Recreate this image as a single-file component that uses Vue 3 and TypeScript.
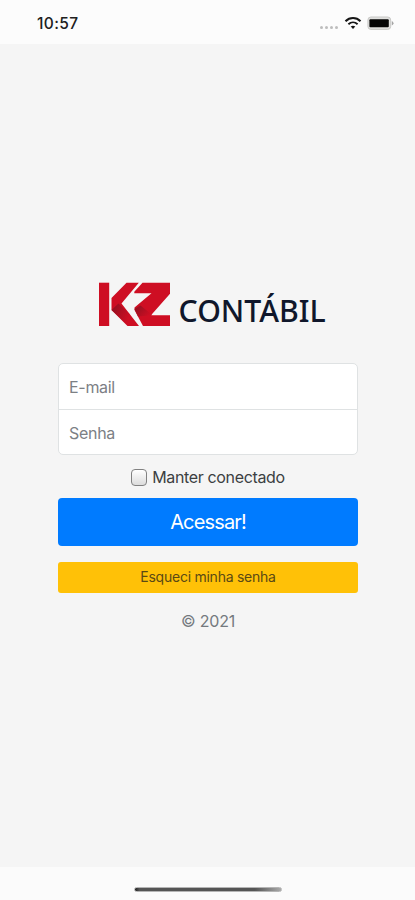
<script setup lang="ts">
import { ref } from 'vue'

const email = ref('')
const password = ref('')
const keepConnected = ref(false)
</script>

<template>
  <div class="screen">
    <header class="status-bar">
      <span class="status-bar__time">10:57</span>
      <div class="status-bar__icons">
        <div class="signal"><i v-for="n in 4" :key="n" /></div>
        <svg class="wifi" width="18" height="14" viewBox="0 0 18 14" fill="none" stroke="#161616">
          <path d="M1.5 5.2C5.8 1 12.2 1 16.5 5.2" stroke-width="2.1" />
          <path d="M4.4 8.2c2.7-2.5 6.5-2.5 9.2 0" stroke-width="1.9" />
          <path d="M6.7 10.6Q9 8.8 11.3 10.6L9 13Z" fill="#161616" stroke="none" />
        </svg>
        <svg width="28" height="15" viewBox="0 0 28 15">
          <rect x="0.9" y="1" width="22.8" height="12.4" rx="3" fill="#e0e0de" stroke="#c9c9c7" />
          <rect x="2.4" y="3.2" width="19.4" height="8" rx="1" fill="#050505" />
          <path d="M24.8 5v4.6q1.7-.8 1.7-2.3T24.8 5z" fill="#a5a5a5" />
        </svg>
      </div>
    </header>

    <main class="content">
      <form class="login" @submit.prevent>
        <svg class="logo" width="228" height="50" viewBox="98 279 228 50" role="img" aria-label="KZ Contábil">
          <defs>
            <linearGradient id="fold" x1="0" y1="0" x2="1" y2="0.6">
              <stop offset="0" stop-color="#8c1020" />
              <stop offset="1" stop-color="#ce0e23" />
            </linearGradient>
          </defs>
          <g fill="#ce0e23">
            <path d="M99 282.7h10.2v43.3H99z" />
            <path d="M126.5 282.7h12.3L121.5 303.5 139 326h-11.5L111.5 310v-12z" />
            <path d="M142.5 282.7H170v11L151 315.3h19V326h-27L134.5 310v-2.5L151.5 293.3h-17.2v-1.6z" />
          </g>
          <path d="M111.5 310l7-6.5 11 10.5 -2 11z" fill="url(#fold)" />
          <path d="M134.5 309l6-3.5 12 9.8-14.5 1.3z" fill="url(#fold)" />
          <text x="178.6" y="321.5" textLength="147" lengthAdjust="spacingAndGlyphs">CONTÁBIL</text>
        </svg>

        <div class="fields">
          <input v-model="email" type="email" placeholder="E-mail">
          <input v-model="password" type="password" placeholder="Senha">
        </div>

        <label class="remember">
          <input v-model="keepConnected" type="checkbox">
          <span>Manter conectado</span>
        </label>

        <button class="btn btn--primary" type="submit">Acessar!</button>
        <button class="btn btn--warning" type="button">Esqueci minha senha</button>
        <p class="copyright">© 2021</p>
      </form>
    </main>

    <footer class="home-area">
      <div class="home-indicator" />
    </footer>
  </div>
</template>

<style>
body {
  background: #f5f5f5;
}
</style>

<style scoped>
.screen {
  display: flex;
  flex-direction: column;
  height: 900px;
  background: #f5f5f5;
  font-family: Inter, Roboto, sans-serif;
}

.screen * {
  box-sizing: border-box;
}

.status-bar {
  display: flex;
  justify-content: space-between;
  height: 44px;
  padding: 14px 20px 0 37px;
  background: #fcfcfc;
}

.status-bar__time {
  color: #202020;
  font-size: 15.5px;
  font-weight: 500;
  line-height: 19px;
  letter-spacing: 0.4px;
}

.status-bar__icons {
  display: flex;
  align-items: flex-start;
  padding-top: 2px;
}

.signal {
  display: flex;
  gap: 2px;
  margin: 10px 6px 0 0;
}

.signal i {
  width: 3px;
  height: 3px;
  border-radius: 50%;
  background: #bdbdbd;
}

.wifi {
  margin-right: 5px;
}

.content {
  flex: 1;
  padding: 235px 57px 0 58px;
}

.login {
  display: flex;
  flex-direction: column;
}

.logo {
  display: block;
  margin-left: 40px;
}

.logo text {
  fill: #10172b;
  font-family: "Noto Sans", sans-serif;
  font-size: 30.5px;
  font-weight: 500;
}

.fields {
  margin-top: 34px;
  overflow: hidden;
  border: 1px solid #dfe2e3;
  border-radius: 5px;
  background: #fff;
}

.fields input {
  display: block;
  width: 100%;
  height: 45px;
  padding: 1px 10px 0;
  border: 0;
  background: transparent;
  color: #495057;
  font: 16px Inter, sans-serif;
  letter-spacing: -0.3px;
  outline: 0;
}

.fields input + input {
  border-top: 1px solid #dfe2e3;
}

.fields input::placeholder {
  color: #7c8085;
  opacity: 1;
}

.remember {
  display: flex;
  align-items: center;
  justify-content: center;
  gap: 5px;
  height: 20px;
  margin-top: 12px;
  color: #3c3f42;
  font-size: 16px;
  letter-spacing: -0.35px;
}

.remember input {
  width: 16px;
  height: 17px;
  margin: 0;
  appearance: none;
  border: 1px solid #818181;
  border-radius: 4px;
  background: linear-gradient(#fff, #dcdcdc);
}

.btn {
  width: 100%;
  border: 0;
  border-radius: 4px;
  font-family: Inter, sans-serif;
}

.btn--primary {
  height: 48px;
  margin-top: 11px;
  background: #007bff;
  color: #fff;
  font-size: 20px;
  letter-spacing: -0.85px;
}

.btn--warning {
  height: 31px;
  margin-top: 16px;
  padding-bottom: 3px;
  border-radius: 3px;
  background: #ffc107;
  color: #5a4915;
  font-size: 14px;
  letter-spacing: -0.25px;
}

.copyright {
  margin: 17px 0 0;
  color: #74797e;
  font-size: 16px;
  line-height: 22px;
  letter-spacing: -0.2px;
  text-align: center;
}

.home-area {
  height: 33px;
  padding-top: 20px;
  background: #fbfbfb;
}

.home-indicator {
  width: 148px;
  height: 5px;
  margin: 0 auto;
  border: 1px solid #b5b5b5;
  border-radius: 3px;
  background: linear-gradient(90deg, #222, #555 3%, #555 82%, #aaa);
}
</style>
